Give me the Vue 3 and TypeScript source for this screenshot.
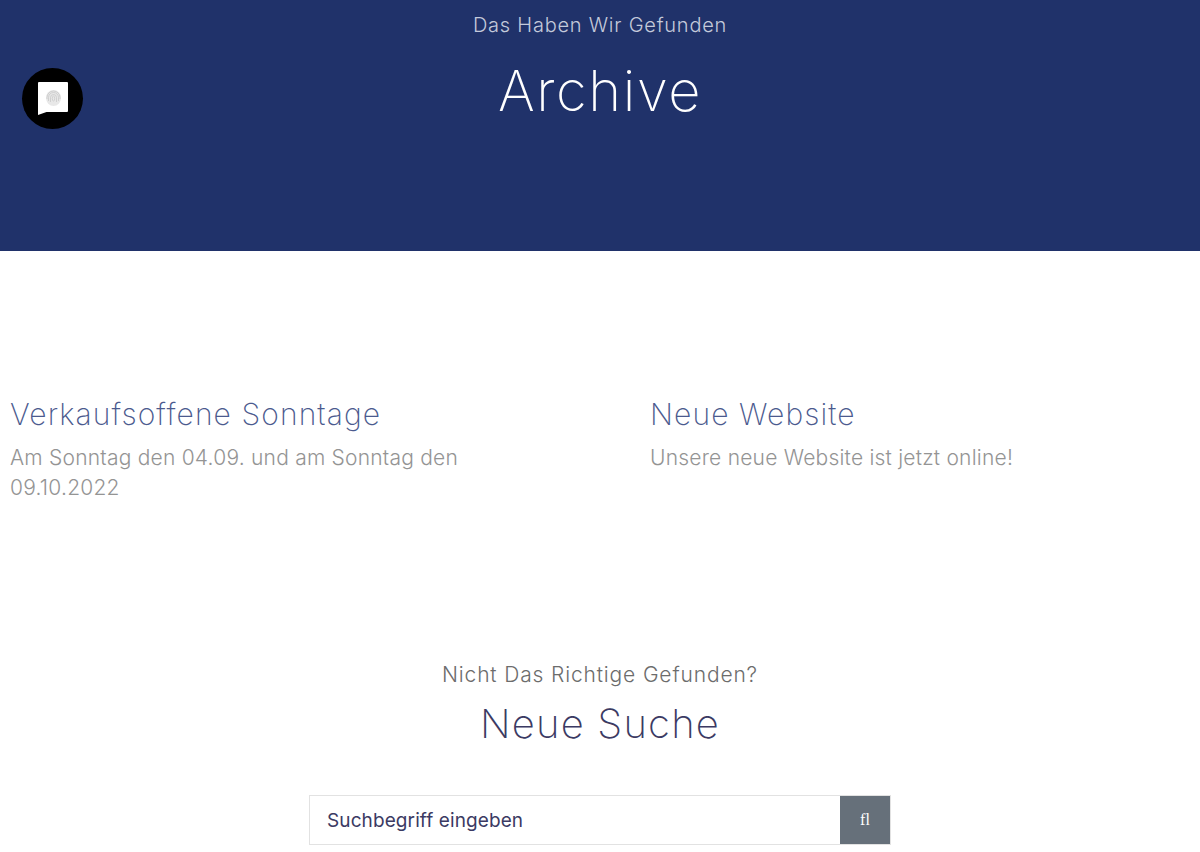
<script setup lang="ts">
interface Post {
  title: string
  text: string
}

const posts: Post[] = [
  { title: 'Verkaufsoffene Sonntage', text: 'Am Sonntag den 04.09. und am Sonntag den 09.10.2022' },
  { title: 'Neue Website', text: 'Unsere neue Website ist jetzt online!' }
];
</script>
<template>
  <div class="page">
    <header class="hero">
      <p class="hero-sub">Das Haben Wir Gefunden</p>
      <h1 class="hero-title">Archive</h1>
    </header>

    <button class="consent" type="button" aria-label="Datenschutz">
      <svg width="30" height="33" viewBox="0 0 30 33">
        <path d="M1 0h28a1 1 0 0 1 1 1v28a1 1 0 0 1-1 1H8.500L0 33V1a1 1 0 0 1 1-1z" fill="#fff" />
        <ellipse cx="15.500" cy="16" rx="7.500" ry="8" fill="#e8e8e8" />
        <g fill="none" stroke="#c6c6c6" stroke-width="0.700">
          <ellipse cx="15.500" cy="16.500" rx="1.200" ry="2.500" />
          <path d="M12.500 20v-4.500a3 3 0 0 1 6 0V20" />
          <path d="M10.500 19v-3.500a5 5 0 0 1 10 0V19" />
          <path d="M9 17v-1.500a6.500 6.500 0 0 1 13 0V17" />
        </g>
      </svg>
    </button>

    <section class="posts">
      <article v-for="post in posts" :key="post.title" class="post">
        <h2 class="post-title">{{ post.title }}</h2>
        <p class="post-text">{{ post.text }}</p>
      </article>
    </section>

    <section class="search">
      <p class="search-sub">Nicht Das Richtige Gefunden?</p>
      <h2 class="search-title">Neue Suche</h2>
      <form class="search-form" @submit.prevent>
        <input class="search-input" type="text" placeholder="Suchbegriff eingeben" />
        <button class="search-btn" type="submit">fl</button>
      </form>
    </section>
  </div>
</template>

<style scoped>
.page {
  position: relative;
  height: 852px;
  overflow: hidden;
  background: #fff;
  font-family: Inter, "Open Sans", sans-serif;
  font-weight: 300;
}

.hero {
  height: 251px;
  box-sizing: border-box;
  padding-top: 12px;
  background: #20326a;
  color: #fff;
  text-align: center;
}

.hero-sub {
  margin: 0;
  font-size: 20px;
  line-height: 27px;
  letter-spacing: 0.77px;
  color: #c4cadb;
}

.hero-title {
  margin: 19px 0 0;
  font-size: 56px;
  line-height: 66px;
  font-weight: 250;
  letter-spacing: 1.6px;
}

.consent {
  position: absolute;
  left: 22px;
  top: 68px;
  display: flex;
  justify-content: center;
  align-items: flex-start;
  width: 61px;
  height: 61px;
  padding: 14px 0 0;
  border: 0;
  border-radius: 50%;
  background: #000;
}

.posts {
  display: grid;
  grid-template-columns: 640px 1fr;
  padding: 145px 10px 0;
  height: 176px;
}

.post-title {
  margin: 0;
  font-size: 30px;
  line-height: 36px;
  font-weight: 200;
  letter-spacing: 1.1px;
  color: #4b5a8e;
}

.post-text {
  margin: 11px 0 0;
  max-width: 490px;
  font-size: 21px;
  line-height: 30px;
  letter-spacing: 0.22px;
  color: #949494;
}

.search {
  display: flex;
  flex-direction: column;
  align-items: center;
  padding-top: 89px;
}

.search-sub {
  margin: 0;
  font-size: 21px;
  line-height: 28px;
  letter-spacing: 0.85px;
  color: #6c6c6c;
}

.search-title {
  margin: 11px 0 0;
  font-size: 40px;
  line-height: 48px;
  font-weight: 200;
  letter-spacing: 1.2px;
  color: #3b3a63;
}

.search-form {
  display: flex;
  width: 582px;
  height: 50px;
  margin-top: 47px;
}

.search-input {
  flex: 1;
  min-width: 0;
  box-sizing: border-box;
  padding: 0 17px;
  border: 1px solid #e2e2e2;
  border-right: 0;
  border-radius: 0;
  outline: 0;
  font: 400 19px Inter, sans-serif;
  letter-spacing: 0.1px;
  color: #3b3a63;
}

.search-input::placeholder {
  color: #3b3a63;
  opacity: 1;
}

.search-btn {
  width: 51px;
  border: 1px solid #e2e2e2;
  border-left: 0;
  background: #66707a;
  color: #fff;
  font: 400 16px "Liberation Serif", serif;
}
</style>
